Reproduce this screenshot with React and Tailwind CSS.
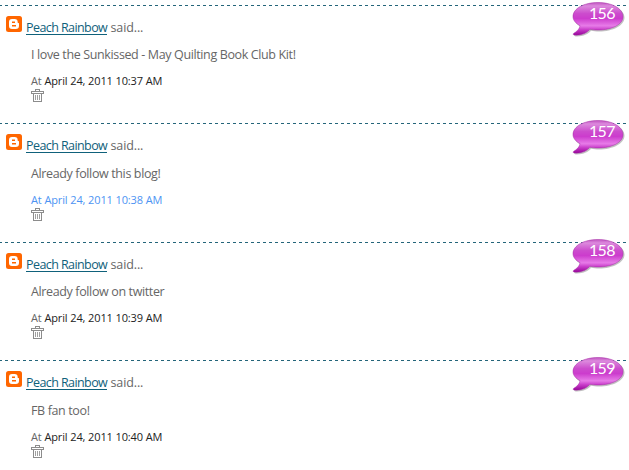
const comments = [
  { id: 156, text: "I love the Sunkissed - May Quilting Book Club Kit!", time: "April 24, 2011 10:37 AM" },
  { id: 157, text: "Already follow this blog!", time: "April 24, 2011 10:38 AM", active: true },
  { id: 158, text: "Already follow on twitter", time: "April 24, 2011 10:39 AM" },
  { id: 159, text: "FB fan too!", time: "April 24, 2011 10:40 AM" },
];

function BloggerIcon() {
  return (
    <svg width="16" height="16" viewBox="0 0 16 16" className="shrink-0">
      <rect width="16" height="16" rx="2.500" fill="#ff6600" />
      <path
        fill="#fff"
        fillRule="evenodd"
        d="M6 3h2.600A3.200 3.200 0 0 1 11.700 6.200c0 .7.3.9.8.9.4 0 .5.2.5.6v2.100a3.200 3.200 0 0 1-3.200 3.200H6a3 3 0 0 1-3-3V6a3 3 0 0 1 3-3ZM6 5.500V7h3V5.500ZM6 9v1.500h4V9Z"
      />
    </svg>
  );
}

function TrashIcon() {
  return (
    <svg width="13" height="13" viewBox="0 0 13 13" fill="none" stroke="#8c8c8c" shapeRendering="crispEdges">
      <path d="M4.500 2V.5h4V2M.5 2.500h12v2H.5zM2.500 5v7.500h8V5" />
      <path stroke="#a0a0a0" d="M4.500 6v5M6.500 6v5M8.500 6v5" />
    </svg>
  );
}

function Bubble({ number }) {
  const fill = `bubble-${number}`;
  return (
    <div className="absolute -top-[4px] right-[3px] h-[37px] w-[55px]">
      <svg width="55" height="37" viewBox="0 0 55 37" className="absolute inset-0">
        <defs>
          <linearGradient id={fill} gradientUnits="userSpaceOnUse" x1="0" y1="1" x2="0" y2="34">
            <stop offset="0" stopColor="#bd4cbd" />
            <stop offset="0.12" stopColor="#dc8add" />
            <stop offset="0.35" stopColor="#cc4ccd" />
            <stop offset="0.5" stopColor="#cc3ccd" />
            <stop offset="0.72" stopColor="#e77be8" />
            <stop offset="0.83" stopColor="#cb40cc" />
            <stop offset="1" stopColor="#98069a" />
          </linearGradient>
        </defs>
        <path
          d="M28 2.500c14 0 25.500 6 25.500 14S42 30.500 28 30.500c-3 0-5.500-.2-8-.7-3 3.500-8 6-15.500 5.600-1.500-.2-1.800-1.200-.6-1.900 3-1.800 6-4.500 6-7.700C5.500 23.500 3 20.500 3 16.500c0-8 11-14 25-14Z"
          fill="#666"
          opacity="0.4"
        />
        <path
          d="M27 1.500c14 0 25 6 25 14s-11 13.500-25 13.500c-3 0-5.500-.2-8-.7-3 3.500-8 6.200-15.500 5.800-1.500-.2-1.800-1.200-.6-1.900 3-1.800 6-4.500 6-7.700C5 22.500 2 19.500 2 15.500c0-8 11-14 25-14Z"
          fill={`url(#${fill})`}
          stroke="#a52aa5"
          strokeWidth="0.5"
        />
      </svg>
      <span className="absolute left-[18px] top-[2px] font-['Lato',sans-serif] text-[16px] leading-[20px] tracking-[-0.700px] text-white">
        {number}
      </span>
    </div>
  );
}

function Comment({ comment }) {
  return (
    <article className="group relative h-[118px] even:h-[119px]">
      <div className="h-px bg-[repeating-linear-gradient(90deg,#24657a_0_2px,transparent_2px_5px,#24657a_5px_6px)]" />
      <Bubble number={comment.id} />
      <div className="flex h-[34px] pl-[6px] pt-[10px]">
        <BloggerIcon />
        <p className="ml-[4px] mt-[4px] whitespace-nowrap text-[12.500px] leading-[16px]">
          <a href="#" className="inline-block h-[15px] border-b border-[#0f617b] tracking-[-0.580px] text-[#0f617b]">
            Peach Rainbow
          </a>{" "}
          <span className="tracking-[-0.100px]">said...</span>
        </p>
      </div>
      <div className="pl-[31px] pt-[7px] group-even:pt-[8px]">
        <p className="whitespace-nowrap text-[12.500px] leading-[16px] tracking-[-0.370px]">{comment.text}</p>
        <p className={`mt-[11px] whitespace-nowrap text-[11px] leading-[14px] tracking-[-0.120px] ${comment.active ? "text-[#4d94f3]" : ""}`}>
          At <span className={comment.active ? "" : "text-[#222]"}>{comment.time}</span>
        </p>
        <div className="mt-px">
          <TrashIcon />
        </div>
      </div>
    </article>
  );
}

export default function App() {
  return (
    <main className="h-[470px] w-[629px] overflow-hidden bg-white pt-[5px] font-['Open_Sans',sans-serif] text-[#666]">
      {comments.map((comment) => (
        <Comment key={comment.id} comment={comment} />
      ))}
    </main>
  );
}
